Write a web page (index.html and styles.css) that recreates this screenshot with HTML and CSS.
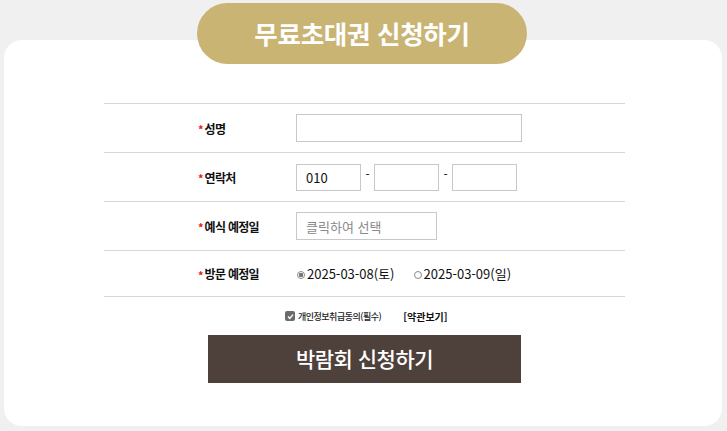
FILE: index.html
```html
<!DOCTYPE html>
<html lang="ko">
<head>
<meta charset="utf-8">
<link rel="stylesheet" href="styles.css">
</head>
<body>
<div class="page">
  <div class="pill">무료초대권 신청하기</div>
  <div class="card">
    <div class="form">
      <div class="row">
        <div class="label"><span class="star">*</span>성명</div>
        <div class="field"><span class="box name"></span></div>
      </div>
      <div class="row">
        <div class="label"><span class="star">*</span>연락처</div>
        <div class="field phone">
          <span class="box ph">010</span><span class="dash">-</span><span class="box ph"></span><span class="dash">-</span><span class="box ph"></span>
        </div>
      </div>
      <div class="row">
        <div class="label"><span class="star">*</span>예식 예정일</div>
        <div class="field"><span class="box date">클릭하여 선택</span></div>
      </div>
      <div class="row last">
        <div class="label"><span class="star">*</span>방문 예정일</div>
        <div class="field radios">
          <span class="opt"><span class="radio on"></span>2025-03-08(토)</span>
          <span class="opt"><span class="radio"></span>2025-03-09(일)</span>
        </div>
      </div>
    </div>
    <div class="agree">
      <span class="check"><svg width="9" height="9" viewBox="0 0 9 9"><path d="M2 4.6 L3.8 6.4 L7 2.6" fill="none" stroke="#fff" stroke-width="1.4"/></svg></span>
      <span class="agree-text">개인정보취급동의(필수)</span>
      <span class="terms">[약관보기]</span>
    </div>
    <div class="btn">박람회 신청하기</div>
  </div>
</div>
</body>
</html>
```
FILE: styles.css
```css
* { box-sizing: border-box; }
html, body { margin: 0; padding: 0; }
body {
  background: #f0f0f0;
  font-family: "Noto Sans CJK KR", "Noto Sans", sans-serif;
  color: #111;
  width: 727px;
  height: 431px;
  overflow: hidden;
}
.page {
  padding-top: 3px;
  display: flex;
  flex-direction: column;
}
.pill {
  position: relative;
  z-index: 2;
  align-self: flex-start;
  margin-left: 197px;
  width: 330px;
  height: 61px;
  border-radius: 31px;
  background: #c9b474;
  color: #fff;
  font-size: 25.5px;
  font-weight: 700;
  letter-spacing: -0.3px;
  display: flex;
  align-items: center;
  justify-content: center;
  padding-bottom: 3px;
}
.card {
  margin-top: -24px;
  margin-left: 4px;
  width: 718px;
  height: 386px;
  background: #fff;
  border-radius: 18px;
  padding-top: 63px;
}
.form {
  margin-left: 100px;
  width: 521px;
  border-top: 1px solid #d6d6d6;
}
.row {
  display: flex;
  align-items: center;
  height: 49px;
  border-bottom: 1px solid #d6d6d6;
}
.row.last { height: 46px; }
.label {
  width: 192px;
  padding-left: 94px;
  font-size: 12px;
  font-weight: 700;
  letter-spacing: -0.7px;
  color: #111;
  display: flex;
  align-items: center;
}
.star {
  color: #e0201a;
  font-size: 11px;
  margin-right: 1px;
  letter-spacing: 0;
  position: relative;
  top: 1px;
}
.field { display: flex; align-items: center; }
.box {
  display: inline-flex;
  align-items: center;
  border: 1px solid #c8c8c8;
  background: #fff;
  font-size: 13px;
  color: #111;
  padding-left: 9px;
}
.box.name { width: 226px; height: 28px; }
.box.ph { width: 65px; height: 27px; }
.box.date { width: 141px; height: 28px; color: #8a8a8a; }
.dash {
  width: 13px;
  text-align: center;
  font-size: 12px;
  position: relative;
  top: -4px;
}
.radios { font-size: 13px; color: #111; gap: 18px; }
.opt { display: inline-flex; align-items: center; letter-spacing: 0; }
.radio {
  width: 8px;
  height: 8px;
  border-radius: 50%;
  border: 1px solid #8a8a8a;
  margin-right: 2px;
  margin-left: 1px;
  margin-top: 2px;
  background: #fff;
}
.radio.on { background: radial-gradient(circle, #777 0 2px, #fff 2.5px); }
.agree {
  display: flex;
  align-items: center;
  height: 38px;
  padding-left: 281px;
  font-size: 9px;
  letter-spacing: -0.5px;
}
.check {
  width: 10px;
  height: 10px;
  border-radius: 2px;
  background: #6b6b6b;
  display: inline-flex;
  align-items: center;
  justify-content: center;
  margin-right: 3px;
}
.agree-text { color: #222; font-weight: 500; }
.terms { margin-left: 22px; font-size: 10px; font-weight: 700; color: #111; letter-spacing: 0; }
.btn {
  margin-left: 204px;
  width: 313px;
  height: 48px;
  background: #4e403a;
  color: #fff;
  font-size: 21px;
  font-weight: 500;
  letter-spacing: -0.5px;
  display: flex;
  align-items: center;
  justify-content: center;
  padding-bottom: 2px;
}
```
